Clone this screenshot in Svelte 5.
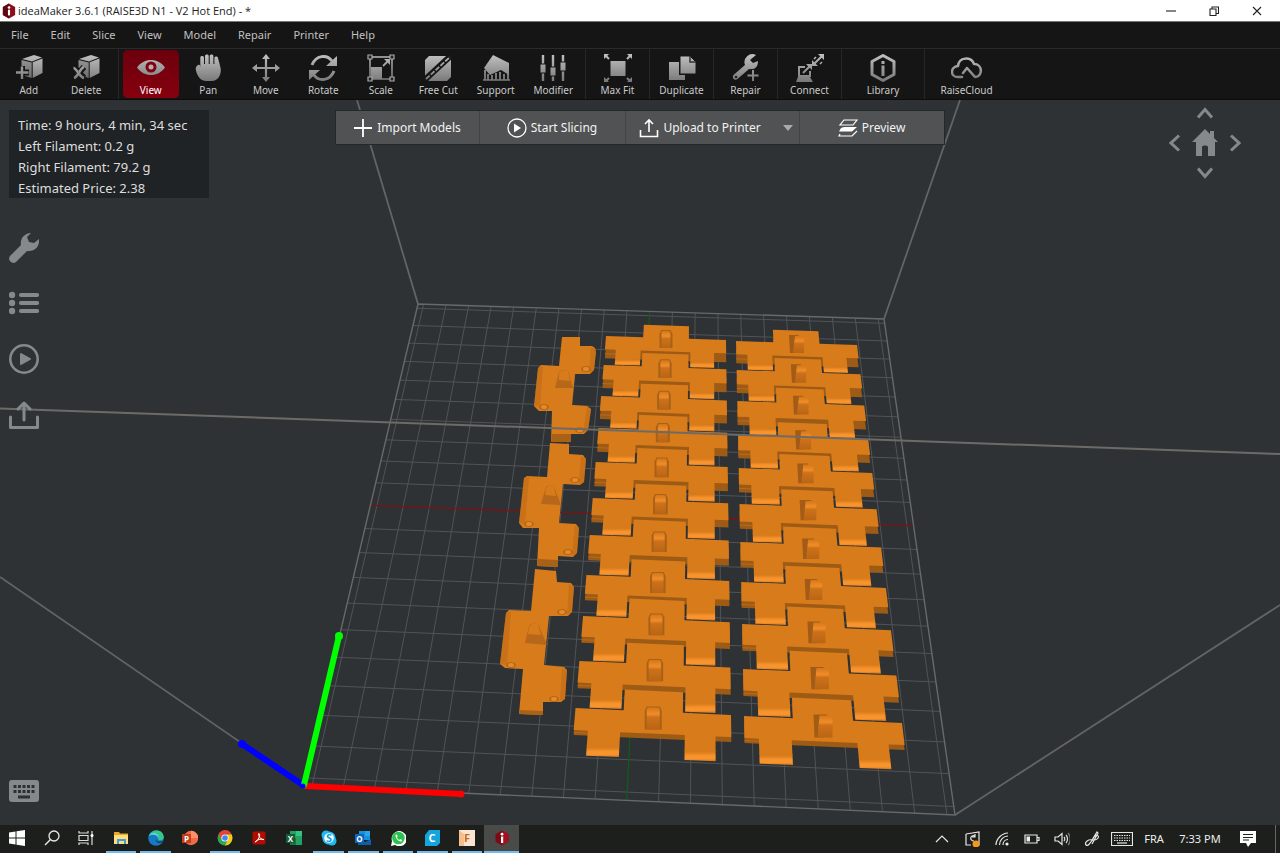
<script>
  const menus = ['File', 'Edit', 'Slice', 'View', 'Model', 'Repair', 'Printer', 'Help'];

  const M = 'fill="url(#metal)"';
  const S = 'fill="none" stroke="url(#metal)"';
  const box = `<path ${M} d="M7 5 19 1l8 2.500-10 4z"/><path ${M} d="M17.700 8.300 27.500 4.500v14.500l-9.800 5z"/><path ${M} d="M6.500 6l10.200 2.500v15.500l-10.200-3z" opacity=".8"/>`;

  const toolGroups = [
    [
      { name: 'Add', art: `${box}<path d="M7 12v13M0 18.500h14" stroke="#161616" stroke-width="6"/><path ${S} stroke-width="2.400" d="M7 12.500v12.500M1 18.500h12.500"/>` },
      { name: 'Delete', art: `${box}<path d="M2 13l10 11M12 13L2 24" stroke="#161616" stroke-width="6"/><path ${S} stroke-width="2.600" d="M1.500 14c3 0 6 9 10.500 10M12 13c-4 1-6 10-10 11"/>` }
    ],
    [
      { name: 'View', active: true, art: `<path ${M} d="M0 13.500C7 3.500 21 3.500 28 13.500 21 23.500 7 23.500 0 13.500z"/><circle cx="14" cy="13" r="4" fill="#b9aeb0" stroke="#82000f" stroke-width="3"/>` },
      { name: 'Pan', art: `<path ${M} d="M6.300 12V3.500c0-2 3.700-2 3.700 0V10h1V2c0-2 3.700-2 3.700 0v8h1V2c0-2 3.700-2 3.700 0v8h1V4c0-2 3.600-2 3.600 0l2.600 10c1 6-2 13-9 13h-5.500c-5 0-8.500-4-10-10-1-3 0-5 2-6 2-.6 2.200 1 2.200 3z"/>` },
      { name: 'Move', art: `<path ${S} stroke-width="2.200" d="M14 3v22M3 14h22"/><path ${M} d="M14 0l4 5h-8zM14 28l4-5h-8zM0 14l5-4v8zM28 14l-5-4v8z"/>` },
      { name: 'Rotate', art: `<path ${S} stroke-width="3" d="M3 11C7 1 18 0 23 7M25 17C21 27 10 28 5 21"/><path ${M} d="M28 2v10H17zM0 26V16h11z"/>` },
      { name: 'Scale', art: `<path ${S} stroke-width="1.500" d="M3 3h22v22H3z"/><path ${M} d="M4 13h11v12H4z"/><path ${S} stroke-width="1.800" d="M16 12l6-6"/><path ${M} d="M23 5v6l-6-6z"/><path fill="#222" stroke="#aaa" stroke-width="1.200" d="M1 1h4v4H1zM23 1h4v4h-4zM1 23h4v4H1zM23 23h4v4h-4z"/>` },
      { name: 'Free Cut', art: `<path ${M} d="M5 2h18l4 4v17l-4 4H5l-4-4V6z"/><path d="M0 26.500L27 1.500" stroke="#161616" stroke-width="6"/><path ${S} stroke-width="1.800" stroke-dasharray="5 1.500" d="M2 25L26 3"/>` },
      { name: 'Support', art: `<path ${M} d="M2 14L11 1l16 8v12l-8-5-11 5z"/><path ${S} stroke-width="1.700" d="M3 16v10M6 20v6M10 21v5M14 19v7M18 18v8M22 20v6M26 20v6M1 26h27"/>` },
      { name: 'Modifier', art: `<path ${S} stroke-width="2.400" d="M4 1v26M14 1v26M24 1v26"/><path ${M} stroke="#161616" d="M1 10h6v9H1zM11 13h6v9h-6zM21 8h6v9h-6z"/>` }
    ],
    [{ name: 'Max Fit', art: `<path ${M} d="M6.500 7h15v15h-15z"/><path ${S} stroke-width="2" d="M5 5L1 1M23 5l4-4M5 24l-4 4M23 24l4 4"/><path ${M} d="M0 0h5L0 5zM28 0v5l-5-5zM0 28v-5l5 5zM28 28v-5l-5 5z"/>` }],
    [{ name: 'Duplicate', art: `<path ${M} d="M1 8h10v13h6v5H1z"/><path ${M} stroke="#161616" d="M12 2h10l6 6v12H12z"/><path d="M22 2v6h6" fill="none" stroke="#333" stroke-width="1.500"/>` }],
    [{ name: 'Repair', art: `<path ${M} d="M24 1a8 8 0 0 0-11 10L1.500 21c-2 3 1 6 4 4L17 15c6 1 9-2 9-8l-5 2-3-3z"/><circle cx="4" cy="23" r="1.300" fill="#222"/><path stroke="#161616" stroke-width="5" d="M21 15v13M15 21h13"/><path ${S} stroke-width="2" d="M21 16v11M15.500 21.500h11"/>` }],
    [{ name: 'Connect', art: `<path ${S} stroke-width="2" d="M9 13H3v9h11v-5M7 19l8-8"/><path ${M} d="M10 10h6v6zM2 23h12l3 5H0z"/><path ${S} stroke-width="2" d="M18 10l8-8"/><path ${M} d="M22 0h6v6zM16 6v6h6z"/><path ${S} stroke-width="1.500" d="M20 3l-2 2M26 8l-2 2"/>` }],
    [{ name: 'Library', art: `<path ${S} stroke-width="3" stroke-linejoin="round" d="M14 1.500l11 6v13l-11 6-11-6v-13z"/><path ${M} d="M12.500 7h3v3h-3zM12.500 11.500h3V22h-3z"/>` }],
    [{ name: 'RaiseCloud', cloud: true, art: `<path ${S} stroke-width="2.500" stroke-linecap="round" stroke-linejoin="round" d="M11 23H7C-1 23-1 13 7 12c1-9 13-10 16-2 9 0 9 13 1 13l-8-9-4 5"/>` }]
  ];

  const sideTools = [
    { name: 'Printer settings', art: '<path fill="#85898c" d="M22 1a10 10 0 0 0-10 12L1 24c-3 4 2 9 6 6l11-11c7 1 13-4 12-12l-5 4-5-1-2-5z"/>' },
    { name: 'Model list', art: '<g stroke="#85898c" stroke-width="4.200" stroke-linecap="round"><path d="M12 7h16M12 15h16M12 23h16"/></g><g fill="#85898c"><circle cx="3" cy="7" r="3.200"/><circle cx="3" cy="15" r="3.200"/><circle cx="3" cy="23" r="3.200"/></g>' },
    { name: 'Slice', art: '<circle cx="15" cy="15" r="13.700" fill="none" stroke="#85898c" stroke-width="2.600"/><path d="M12 10l9 5-9 5z" fill="#85898c" stroke="#85898c" stroke-width="2" stroke-linejoin="round"/>' },
    { name: 'Upload', art: '<path d="M1.500 17v10.500h27V17M15 20V4M9 9l6-6 6 6" fill="none" stroke="#85898c" stroke-width="3" stroke-linejoin="round" stroke-linecap="round"/>' }
  ];

  const letter = (t, x, y, size, fill = '#fff') =>
    `<text x="${x}" y="${y}" font-family="Open Sans, sans-serif" font-weight="700" font-size="${size}" fill="${fill}">${t}</text>`;

  const taskApps = [
    { name: 'Start', art: '<path fill="#fff" d="M0 2.500l6.500-1v6H0zM7.500 1.300L16 0v7.500H7.500zM0 8.500h6.500v6L0 13.500zM7.500 8.500H16V16l-8.500-1.300z"/>' },
    { name: 'Search', art: '<circle cx="10" cy="6" r="5" fill="none" stroke="#e8e8e8" stroke-width="1.300"/><path d="M6.500 9.500L1 15" stroke="#e8e8e8" stroke-width="1.400"/>' },
    { name: 'Task View', art: '<path fill="none" stroke="#dcdcdc" stroke-width="1.200" d="M1 1v2h9V1M1 5.500h9v5H1zM1 15v-2h9v2M14 1v14"/><circle cx="14" cy="5.500" r="1.500" fill="#fff"/>' },
    { name: 'File Explorer', open: true, art: '<path fill="#e8a928" d="M1 2h5l1 1.500h8V14H1z"/><path fill="#ffdf7d" d="M1 5h14v9H1z"/><path fill="#3d9bdc" d="M4 9h9v5h-2v-3H6v3H4z"/>' },
    { name: 'Edge', open: true, art: '<circle cx="8" cy="8" r="7.800" fill="#1679c4"/><path fill="#39c68b" d="M1 6C3-1 15-2 15.800 7c0 4-5 4-5.800 2 2-4-5-6-9-3z"/><path fill="#58d6e4" d="M1 6c4-6 11-2 9 2C9 4 4 4 1 6z"/><path fill="#1d2021" d="M8 9c0 3 4 3.500 7 2-2 3-8 2-7-2z"/>' },
    { name: 'PowerPoint', art: `<circle cx="9" cy="8" r="7.200" fill="#ed6c47"/><path fill="#ff8f6b" d="M9 .8A7.200 7.200 0 0 1 16.200 8H9z"/><path fill="#c43e1c" d="M0 4h9v9H0z"/>${letter('P', 2, 11.5, 8)}` },
    { name: 'Chrome', open: true, art: '<circle cx="8" cy="8" r="7.500" fill="#31a554"/><path fill="#e54335" d="M1.500 4C5-1.500 12-1 14.700 4.500H8L5 10z"/><path fill="#fbc715" d="M14.700 4.500C17 10 13 15.600 8 15.500L11 10l-1-5.500z"/><circle cx="8" cy="8" r="3.600" fill="#fff"/><circle cx="8" cy="8" r="2.800" fill="#4285f4"/>' },
    { name: 'Acrobat', art: '<rect x="1.500" y="1.500" width="13" height="13" rx="2" fill="#b30b00"/><path d="M4 12c3-1 6-7 4-8.500-1.500 0 1 7 5 6-3-1-7 0-9 2.500z" fill="none" stroke="#fff" stroke-width="1"/>' },
    { name: 'Excel', art: `<path fill="#21a366" d="M4 1h12v14H4z"/><path fill="#107c41" d="M4 8h6v7H4z"/><path fill="#33c481" d="M10 1h6v5h-6z"/><path fill="#185c37" d="M0 4h9v9H0z"/>${letter('X', 1.8, 11.5, 8)}` },
    { name: 'Skype', open: true, art: `<circle cx="8" cy="8" r="6.600" fill="#1fb8f2"/><circle cx="5" cy="5" r="4.500" fill="#1fb8f2"/><circle cx="11" cy="11" r="4.500" fill="#1fb8f2"/><circle cx="8" cy="8" r="4.800" fill="#fff"/>${letter('S', 5, 12, 11, '#0a9fe0')}` },
    { name: 'Outlook', open: true, art: `<path fill="#1490df" d="M4 1h11v9H4z"/><path fill="#28a8ea" d="M10 1h5v5h-5z"/><path fill="#0f5ca8" d="M3 9l7 3 6-3v6H3z"/><path fill="#0f65b8" d="M0 4h9v9H0z"/>${letter('O', 1.2, 11.5, 8)}` },
    { name: 'WhatsApp', open: true, art: '<path fill="#fff" d="M1 16l1-5A7.600 7.600 0 1 1 5 15z"/><circle cx="8.400" cy="8" r="6.300" fill="#2bc24f"/><path d="M5.500 5c0 4 3 6.500 6 6.500l.7-1.500-2-1-1 1C8 9.500 7 8.300 6.700 7.300l1-.8-.8-2z" fill="#fff"/>' },
    { name: 'Cura', open: true, art: `<path fill="#16a4dd" d="M5 0h11v13l-3 3H1V5z"/>${letter('C', 4.5, 12, 11)}` },
    { name: 'Fusion', open: true, art: `<path fill="#fbe5cf" d="M0 0h16v16H0z"/><path fill="#f09a4b" d="M0 0l5 4v12H0z" opacity=".5"/>${letter('F', 5, 12, 11, '#c9681f')}` },
    { name: 'ideaMaker', open: true, current: true, art: `<path fill="#7b0a14" d="M8 .5l6.500 3.700v7.600L8 15.500l-6.500-3.700V4.200z"/><path fill="#a3111f" d="M8 .5l6.500 3.700v7.600L8 15.500z"/><circle cx="8" cy="4.200" r="1.400" fill="#fff"/><path fill="#fff" d="M7 6.500h2.200V13H7z"/>` }
  ];

  const tray = [
    { name: 'Show hidden icons', art: '<path d="M2 11l6-6 6 6"/>' },
    { name: 'Display sync', art: '<path d="M2 3l13-2v13H9M2 3v11h5M11 5c-5-2-6 5-1 5M11 3v3H8"/><circle cx="12" cy="13" r="3.500" fill="#f59a17" stroke="none"/>' },
    { name: 'Wi-Fi', art: '<path d="M2 14C2 8 8 2 14 2M5.500 14c0-5 4-9 8.500-9M9 14c0-3 2-5.500 5-5.500"/><circle cx="13" cy="13" r="1.600" fill="#eee" stroke="none"/>' },
    { name: 'Battery', art: '<path d="M1 4h12v8H1zM13 6.500h2v3h-2"/><path d="M2.500 5.500H6v5H2.500z" fill="#eee" stroke="none"/>' },
    { name: 'Volume', art: '<path d="M1 6h3l4-3.500v11L4 10H1zM10 6c1 1 1 3 0 4M12 4c2 2 2 6 0 8"/><path d="M14 2c3 3 3 9 0 12" stroke="#777"/>' },
    { name: 'Pen input', art: '<path d="M2 14c-2-3 3-6 6-5 6 1 8-4 5-5-3 0-4 5-7 8-1 2-3 3-4 2zM8 9l5-8 1 1-6 11"/>' }
  ];

  // Projective map from the unit square to a quadrilateral (tl, tr, br, bl).
  function projector([x0, y0], [x1, y1], [x2, y2], [x3, y3]) {
    const dx1 = x1 - x2, dx2 = x3 - x2, sx = x0 - x1 + x2 - x3;
    const dy1 = y1 - y2, dy2 = y3 - y2, sy = y0 - y1 + y2 - y3;
    const den = dx1 * dy2 - dx2 * dy1;
    const g = (sx * dy2 - dx2 * sy) / den;
    const h = (dx1 * sy - sx * dy1) / den;
    return (u, v) => {
      const w = g * u + h * v + 1;
      return [
        ((x1 - x0 + g * x1) * u + (x3 - x0 + h * x3) * v + x0) / w,
        ((y1 - y0 + g * y1) * u + (y3 - y0 + h * y3) * v + y0) / w
      ];
    };
  }

  const bed = projector([418, 304], [884, 319], [955, 815], [304, 786]);
  const bedSize = 205;
  const line = (a, b) => ({ x1: a[0], y1: a[1], x2: b[0], y2: b[1] });
  const grid = [];
  for (let mm = 2.5; mm < bedSize; mm += 10) {
    const t = mm / bedSize;
    if (mm === 102.5) continue;
    grid.push(line(bed(t, 0), bed(t, 1)), line(bed(0, t), bed(1, t)));
  }
  const bedOutline = [bed(0, 0), bed(1, 0), bed(1, 1), bed(0, 1)].join(' ');
  const xMid = line(bed(0, 0.5), bed(1, 0.5));
  const yMid = line(bed(0.5, 0), bed(0.5, 1));

  // Each column is eleven chain links; v counts links from the back row.
  function linkColumn(rowY, left, right, slope, lean) {
    return rowY.map((y0, r) => {
      const f = (y0 - rowY[0]) / (rowY[10] - rowY[0]);
      const pitch = r < 10 ? rowY[r + 1] - y0 : 48;
      const x0 = left[0] + (left[1] - left[0]) * f;
      const x1 = right[0] + (right[1] - right[0]) * f;
      const dl = (left[1] - left[0]) / (rowY[10] - rowY[0]);
      const dr = (right[1] - right[0]) / (rowY[10] - rowY[0]);
      const tilt = slope[0] + (slope[1] - slope[0]) * f;
      const t = 9 - 4 * f;
      const at = (u, v) => {
        const dy = v * pitch;
        return [x0 + dl * dy + u * (x1 - x0 + (dr - dl) * dy), y0 + dy + u * tilt];
      };
      const pts = (list, drop = 0) => list.map(([u, v]) => { const [x, y] = at(u, v); return `${x},${y + drop}`; }).join(' ');
      const [kx, ky] = at(0.5, 0);
      const kw = 13 + 4 * f;
      return {
        base: pts([[0, 0], [0.31, 0], [0.31, -0.43], [0.69, -0.43], [0.69, 0], [1, 0], [1, 0.46], [0.705, 0.46], [0.3, 0.46], [0, 0.46]], t),
        seam: pts([[0, 0.46], [0.09, 0.46]], t / 2) + ' ' + pts([[0.09, 0.46]], t / 2),
        top: pts([[0, 0], [0.31, 0], [0.31, -0.43], [0.69, -0.43], [0.69, 0], [1, 0], [1, 0.46], [0.9, 0.46], [0.9, 0.78], [0.705, 0.78], [0.705, 0.46], [0.295, 0.46], [0.295, 0.78], [0.09, 0.78], [0.09, 0.46], [0, 0.46]]),
        legs: [[0.09, 0.295], [0.705, 0.9]].map(([a, b]) => pts([[a, 0.76], [b, 0.76], [b, 0.98], [a, 0.98]])),
        knob: { x: kx - kw / 2, y: ky - 8 + 3 * f, w: kw, h: 18 + 5 * f, lean }
      };
    });
  }

  const columns = [
    linkColumn([336, 365, 396, 428, 462, 498, 535, 575, 616, 661, 708], [606, 575.5], [726, 731], [4, 7], false),
    linkColumn([341, 370, 401, 435, 468, 504, 542, 582, 624, 669, 716], [736, 744], [857, 902], [4, 7], true)
  ];

  const sideways = [
    {
      body: '562,337 580,337 580,346 592,346 595,348 596,352 594,370 590,374 575,374 572,405 587,406 591,409 588,430 584,434 571,434 571,442 551,442 552,411 539,411 534,406 538,368 541,365 559,366',
      under: '552,434 571,434 571,442 551,442', knob: '555,388 559,372 562,370 568,371 573,388', cap: '559,373 562,370 568,371 570,381 559,380',
      holes: [[586, 369], [544, 407], [580, 430]], rims: ['591,347 596,350 594,370 589,373', '587,407 591,411 588,430 583,433', '534,405 538,368 543,366 540,406']
    },
    {
      body: '550,443 569,444 569,454 583,455 586,459 584,482 580,485 563,484 559,523 576,524 579,528 577,553 573,557 558,556 558,567 537,566 539,528 523,528 519,523 524,478 527,476 547,477',
      under: '538,559 558,560 558,567 537,566', knob: '541,504 546,487 550,485 554,487 561,505', cap: '546,488 550,485 554,487 556,496 545,495',
      holes: [[575, 480], [529, 524], [568, 552]], rims: ['581,456 586,459 584,482 579,484', '575,525 579,528 577,553 572,556', '519,523 524,478 529,477 525,524']
    },
    {
      body: '535,569 556,571 557,582 571,583 574,587 572,612 568,616 549,616 544,665 564,667 567,670 565,699 561,702 543,702 543,715 519,714 523,669 505,668 500,664 506,613 509,610 531,611',
      under: '520,710 543,711 543,715 519,714', knob: '525,643 529,626 533,623 538,624 547,645', cap: '529,627 533,623 538,624 541,635 528,634',
      holes: [[562, 612], [511, 665], [554, 699]], rims: ['569,584 574,587 572,612 567,615', '562,668 567,670 565,699 560,701', '500,664 506,613 511,611 507,665']
    }
  ];
</script>

{#snippet icon(art, w, h, vb)}
  <svg width={w} height={h} viewBox={vb} aria-hidden="true">{@html art}</svg>
{/snippet}

<svg class="defs" width="0" height="0" aria-hidden="true">
  <defs>
    <linearGradient id="metal" gradientUnits="userSpaceOnUse" x1="0" y1="0" x2="0" y2="28">
      <stop offset="0" stop-color="#c2c2c2" /><stop offset="1" stop-color="#777" />
    </linearGradient>
    <linearGradient id="leg" x1="0" y1="0" x2="0" y2="1">
      <stop offset="0" stop-color="#d87b1a" /><stop offset=".2" stop-color="#d87b1a" /><stop offset=".55" stop-color="#f8942d" /><stop offset=".8" stop-color="#f8942d" /><stop offset="1" stop-color="#cc7219" />
    </linearGradient>
    <linearGradient id="knob" x1="0" y1="0" x2="0" y2="1">
      <stop offset="0" stop-color="#d3771b" /><stop offset=".3" stop-color="#f18d28" /><stop offset=".45" stop-color="#cc7119" /><stop offset="1" stop-color="#b96516" />
    </linearGradient>
  </defs>
</svg>

<div class="window">
  <header class="title">
    <svg width="14" height="16" viewBox="0 0 16 17" aria-hidden="true"><path fill="#8b0d19" d="M8 0l7 4v9l-7 4-7-4V4z" /><path fill="#5d0710" d="M8 0L1 4v9l7 4z" /><circle cx="8" cy="4.500" r="1.500" fill="#fff" /><path fill="#fff" d="M6.800 7h2.400v6.500H6.800z" /></svg>
    <h1>ideaMaker 3.6.1 (RAISE3D N1 - V2 Hot End) - *</h1>
    <div class="winbtns">
      <button aria-label="Minimize"><svg width="10" height="10" viewBox="0 0 10 10"><path d="M0 5h10" /></svg></button>
      <button aria-label="Restore"><svg width="10" height="10" viewBox="0 0 10 10"><path d="M1 3h6v6.500H1zM3 3V1h6.500v6.500H7" /></svg></button>
      <button aria-label="Close"><svg width="10" height="10" viewBox="0 0 10 10"><path d="M1 1l8 8M9 1L1 9" /></svg></button>
    </div>
  </header>

  <nav class="menu">
    {#each menus as m}<button>{m}</button>{/each}
  </nav>

  <div class="toolbar" role="toolbar" aria-label="Tools">
    {#each toolGroups as group}
      <div class="group">
        {#each group as tool}
          <button class="tool" class:active={tool.active}>
            {@render icon(tool.art, tool.cloud ? 32 : 28, 28, tool.cloud ? '0 0 32 28' : '0 0 28 28')}
            <span>{tool.name}</span>
          </button>
        {/each}
      </div>
    {/each}
  </div>

  <main>
    <svg class="scene" viewBox="0 100 1280 725" preserveAspectRatio="xMidYMid slice" role="img" aria-label="Build plate">
      <g stroke="#505456" stroke-width="1">
        {#each grid as l}<line {...l} />{/each}
      </g>
      <line {...xMid} stroke="#7a1416" stroke-width="1.300" />
      <line {...yMid} stroke="#12591c" stroke-width="1.300" />
      <polygon points={bedOutline} fill="none" stroke="#67696b" stroke-width="1.400" />
      <path d="M357 100L418 304M960 100L884 319M304 786L0 577M955 815L1280 605" stroke="#626466" stroke-width="1.800" />

      {#each sideways as p}
        <polygon points={p.body} fill="#d87b1a" />
        {#each p.rims as rim}<polygon points={rim} fill="#b86716" opacity=".45" />{/each}
        <polygon points={p.under} fill="#a86218" />
        <polygon points={p.knob} fill="#b66719" />
        <polygon points={p.cap} fill="#d77b1d" />
        {#each p.holes as [cx, cy]}<ellipse {cx} {cy} rx="5" ry="3" fill="#b66719" /><ellipse {cx} {cy} rx="3" ry="2" fill="#e58a2b" />{/each}
      {/each}

      {#each columns as column}
        {#each column as link}
          <polygon points={link.base} fill="#9d5b16" />
          <polyline points={link.seam} fill="none" stroke="#b86b1c" />
          <polygon points={link.top} fill="#d87b1a" />
          {#each link.legs as leg}<polygon points={leg} fill="url(#leg)" />{/each}
          {#if link.knob.lean}
            <path fill="#a25c17" d="M{link.knob.x - 1} {link.knob.y}h{link.knob.w - 3}l-4 5v{link.knob.h - 5}h-{link.knob.w - 8}z" />
            <path fill="url(#knob)" d="M{link.knob.x + 5} {link.knob.y + 1}h{link.knob.w - 7}l3 3v{link.knob.h - 4}h-{link.knob.w - 2}z" />
          {:else}
            <path fill="#a86218" d="M{link.knob.x} {link.knob.y + link.knob.h}v-{link.knob.h - 4}l2-4h{link.knob.w - 4}l2 4v{link.knob.h - 4}z" />
            <path fill="url(#knob)" d="M{link.knob.x + 2} {link.knob.y + link.knob.h}v-{link.knob.h - 3}l1-2h{link.knob.w - 6}l1 2v{link.knob.h - 3}z" />
          {/if}
        {/each}
      {/each}

      <path d="M0 408.500L1280 454" stroke="#6c6b68" stroke-width="2" />
      <g stroke-width="6" stroke-linecap="round">
        <path d="M303 785L242 744" stroke="#00f" />
        <path d="M305 786L461 794" stroke="#f00" />
        <path d="M304 785L339 636" stroke="#0f0" />
      </g>
      <circle cx="339" cy="636" r="4" fill="#0f0" /><circle cx="461" cy="794" r="3.500" fill="#f00" /><circle cx="242" cy="744" r="4" fill="#00f" />
      <circle cx="303" cy="786" r="2.500" fill="#00f" />
    </svg>

    <section class="info" aria-label="Print estimate">
      <p>Time: 9 hours, 4 min, 34 sec</p>
      <p>Left Filament: 0.2 g</p>
      <p>Right Filament: 79.2 g</p>
      <p>Estimated Price: 2.38</p>
    </section>

    <div class="actions">
      <button>
        <svg width="20" height="20" viewBox="0 0 20 20"><path d="M10 1v18M1 10h18" fill="none" stroke="#fff" stroke-width="1.800" /></svg>Import Models
      </button>
      <button>
        <svg width="20" height="20" viewBox="0 0 20 20"><circle cx="10" cy="10" r="9" fill="none" stroke="#fff" stroke-width="1.300" /><path d="M7 5.500l7 4.500-7 4.500z" fill="#fff" /></svg>Start Slicing
      </button>
      <button class="upload">
        <svg width="20" height="20" viewBox="0 0 20 20"><path d="M1.500 12v6.500h17V12M10 14V2M6 6l4-4 4 4" fill="none" stroke="#fff" stroke-width="1.600" /></svg>Upload to Printer
        <svg class="caret" width="10" height="6" viewBox="0 0 10 6"><path d="M0 0h10L5 6z" fill="#aaa" /></svg>
      </button>
      <button>
        <svg width="20" height="18" viewBox="0 0 20 18"><path d="M6 1h13l-4 5H2z" fill="none" stroke="#fff" stroke-width="1.200" /><path d="M3 9l3-1h13l-5 4.500H1z" fill="#fff" /><path d="M2 15l-1 2h13l5-5" fill="none" stroke="#fff" stroke-width="1.200" /></svg>Preview
      </button>
    </div>

    <div class="pad">
      <button class="up" aria-label="Rotate up"><svg width="18" height="12" viewBox="0 0 18 12"><path d="M2 10.500l7-8 7 8" /></svg></button>
      <button aria-label="Rotate left"><svg width="12" height="18" viewBox="0 0 12 18"><path d="M10 1.500l-8 7.500 8 7.500" /></svg></button>
      <button aria-label="Home view"><svg width="26" height="28" viewBox="0 0 26 28"><path d="M13 0l5 5V2h4v7l4 4h-3v14h-7V18c0-2-6-2-6 0v9H4V13H0z" fill="#85898c" stroke="none" /></svg></button>
      <button aria-label="Rotate right"><svg width="12" height="18" viewBox="0 0 12 18"><path d="M2 1.500l8 7.500-8 7.500" /></svg></button>
      <button class="down" aria-label="Rotate down"><svg width="18" height="12" viewBox="0 0 18 12"><path d="M2 1.500l7 8 7-8" /></svg></button>
    </div>

    <aside class="side">
      {#each sideTools as s}
        <button aria-label={s.name}>{@render icon(s.art, 30, 32, '0 0 30 32')}</button>
      {/each}
      <button class="keys" aria-label="Keyboard shortcuts">
        <svg width="30" height="22" viewBox="0 0 30 22"><rect width="30" height="22" rx="3" fill="#85898c" /><path d="M4.500 6.500h21M4.500 11.500h21" stroke="#2d3134" stroke-width="3" stroke-dasharray="3 1.500" /><path d="M9 17h12" stroke="#2d3134" stroke-width="3" /></svg>
      </button>
    </aside>
  </main>

  <footer>
    <div class="apps">
      {#each taskApps as a}
        <button class:open={a.open} class:current={a.current} aria-label={a.name}>{@render icon(a.art, 16, 16, '0 0 16 16')}</button>
      {/each}
    </div>
    <div class="tray">
      {#each tray as t}
        <button aria-label={t.name}>{@render icon(t.art, 16, 16, '0 0 16 16')}</button>
      {/each}
      <button class="kb" aria-label="Touch keyboard"><svg width="22" height="14" viewBox="0 0 22 14"><path d="M.5.5h21v13H.5z" /><path d="M3 3.500h16M3 6h16M3 8.500h16" stroke-dasharray="1.500 1" /><path d="M6 11h10" /></svg></button>
      <button class="lang">FRA</button>
      <button class="clock">7:33 PM</button>
      <button class="notes" aria-label="Notifications"><svg width="16" height="16" viewBox="0 0 16 16"><path d="M0 0h16v12h-5l-3 4-2-4H0z" fill="#fff" stroke="none" /><path d="M3 3.500h10M3 6.500h10M3 9h6" stroke="#222" /></svg></button>
    </div>
  </footer>
</div>

<style>
  :global(body) { background: #2e3235; }
  .defs { position: absolute; }
  button { margin: 0; padding: 0; border: 0; background: none; color: inherit; font: inherit; }
  svg { display: block; flex: none; }
  .window { display: flex; flex-direction: column; min-height: 100vh; font-family: "Noto Sans", sans-serif; color: #d0d0d0; }

  .title { display: flex; align-items: center; height: 21px; padding-left: 2px; gap: 2px; background: #fff; color: #222; border-bottom: 1px solid #777; }
  .title h1 { flex: 1; margin: 0; font: 400 11px/20px "Open Sans", sans-serif; }
  .winbtns { display: flex; padding-right: 2px; }
  .winbtns button { display: grid; place-items: center; width: 43px; height: 20px; }
  .winbtns svg { fill: none; stroke: #222; stroke-width: 1.1; }

  .menu { display: flex; align-items: center; gap: 22px; height: 26px; padding-left: 11px; background: #151515; border-bottom: 1px solid #2a2a2a; font-size: 11px; line-height: 16px; color: #c0c0c0; }

  .toolbar { display: flex; height: 50px; background: #151515; border-bottom: 1px solid #0c0c0c; }
  .group { display: flex; padding: 1px 3px; border-right: 1px solid #262626; box-sizing: border-box; }
  .group:first-child { padding-left: 0; width: 119px; }
  .group:nth-child(2) { width: 467px; }
  .group:nth-child(n + 3) { width: 64px; }
  .group:nth-child(n + 7) { width: 83px; }
  .group:last-child { border: 0; }
  .tool { flex: 1; min-width: 0; display: flex; flex-direction: column; align-items: center; padding-top: 4px; gap: 1px; font-size: 10px; line-height: 14px; white-space: nowrap; border: 0 solid transparent; border-width: 0 1px; border-radius: 5px; color: #cacaca; }
  .tool.active { background: linear-gradient(#6b000c, #87000f) padding-box; color: #fff; }

  main { position: relative; flex: 1; display: grid; grid-template-columns: 1fr auto 1fr; align-items: start; padding: 10px 10px 23px 9px; background: #2e3235; overflow: hidden; min-height: 692px; }
  .scene { position: absolute; inset: 0; width: 100%; height: 100%; }
  .info, .actions, .pad, .side { position: relative; }
  .info { width: 191px; padding: 5px 0 0 9px; height: 83px; background: #1f2325; color: #dedede; font-size: 13px; line-height: 21px; }
  .info p { margin: 0; white-space: nowrap; }

  .actions { display: flex; height: 33px; background: #515253; border: 1px solid #252829; color: #f2f2f2; font-size: 12px; line-height: 16px; }
  .actions button { display: flex; align-items: center; justify-content: center; gap: 4px; width: 144px; border-right: 1px solid #434445; }
  .actions button + button { width: 146px; }
  .actions .upload.upload { width: 174px; padding-left: 8px; }
  .actions button:last-child { border: 0; width: 144px; }
  .caret { margin-left: 18px; }

  .pad { justify-self: end; display: grid; grid-template-columns: 15px 45px 15px; grid-template-rows: 12px 48px 12px; place-items: center; margin: -3px 28px 0 0; }
  .pad svg { fill: none; stroke: #85898c; stroke-width: 3; }
  .pad .up, .pad .down { grid-column: 1 / -1; }

  .side { grid-column: 1; display: flex; flex-direction: column; align-items: flex-start; gap: 24px; margin-top: 33px; height: 570px; }
  .side .keys { margin-top: auto; }

  footer { display: flex; justify-content: space-between; height: 28px; background: #1d1f1c; color: #eee; }
  .apps { display: flex; width: 519px; }
  .apps button { flex: 1; display: grid; place-items: center; border-bottom: 2px solid transparent; }
  .apps .open { border-image: linear-gradient(to right, transparent 4px, #76b9ed 4px, #76b9ed 31px, transparent 31px) 2; }
  .apps .current { background: #484b48; border-image: none; border-bottom-color: #76b9ed; }
  .tray { display: flex; align-items: center; padding-right: 4px; font-size: 11px; line-height: 16px; }
  .tray > button { display: grid; place-items: center; width: 30px; height: 28px; }
  .tray svg { fill: none; stroke: #e6e6e6; stroke-width: 1.2; }
  .tray .lang { width: 34px; }
  .tray .clock { width: 58px; }
  .tray .notes { width: 47px; padding-right: 8px; border-right: 1px solid #666; }
</style>
